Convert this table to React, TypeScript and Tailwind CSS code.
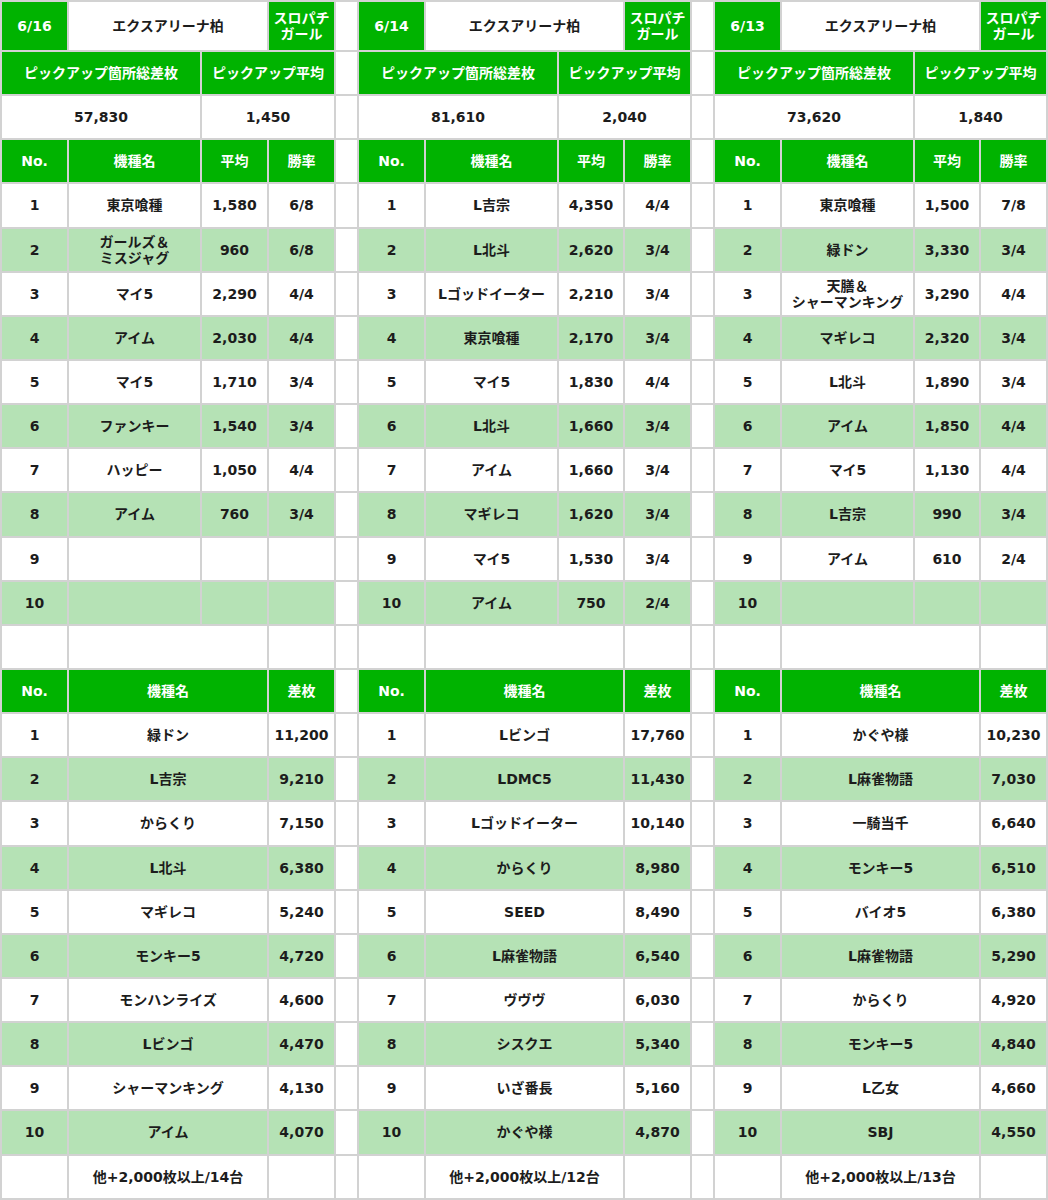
import React from 'react';

type Kind = 'head' | 'white' | 'light';

interface Panel {
  date: string;
  total: string;
  average: string;
  picks: Array<[string, string, string] | null>;
  ranking: Array<[string, string]>;
  footer: string;
}

const panels: Panel[] = [
  {
    date: '6/16',
    total: '57,830',
    average: '1,450',
    picks: [
      ['東京喰種', '1,580', '6/8'],
      ['ガールズ＆\nミスジャグ', '960', '6/8'],
      ['マイ5', '2,290', '4/4'],
      ['アイム', '2,030', '4/4'],
      ['マイ5', '1,710', '3/4'],
      ['ファンキー', '1,540', '3/4'],
      ['ハッピー', '1,050', '4/4'],
      ['アイム', '760', '3/4'],
      null,
      null,
    ],
    ranking: [
      ['緑ドン', '11,200'],
      ['L吉宗', '9,210'],
      ['からくり', '7,150'],
      ['L北斗', '6,380'],
      ['マギレコ', '5,240'],
      ['モンキー5', '4,720'],
      ['モンハンライズ', '4,600'],
      ['Lビンゴ', '4,470'],
      ['シャーマンキング', '4,130'],
      ['アイム', '4,070'],
    ],
    footer: '他+2,000枚以上/14台',
  },
  {
    date: '6/14',
    total: '81,610',
    average: '2,040',
    picks: [
      ['L吉宗', '4,350', '4/4'],
      ['L北斗', '2,620', '3/4'],
      ['Lゴッドイーター', '2,210', '3/4'],
      ['東京喰種', '2,170', '3/4'],
      ['マイ5', '1,830', '4/4'],
      ['L北斗', '1,660', '3/4'],
      ['アイム', '1,660', '3/4'],
      ['マギレコ', '1,620', '3/4'],
      ['マイ5', '1,530', '3/4'],
      ['アイム', '750', '2/4'],
    ],
    ranking: [
      ['Lビンゴ', '17,760'],
      ['LDMC5', '11,430'],
      ['Lゴッドイーター', '10,140'],
      ['からくり', '8,980'],
      ['SEED', '8,490'],
      ['L麻雀物語', '6,540'],
      ['ヴヴヴ', '6,030'],
      ['シスクエ', '5,340'],
      ['いざ番長', '5,160'],
      ['かぐや様', '4,870'],
    ],
    footer: '他+2,000枚以上/12台',
  },
  {
    date: '6/13',
    total: '73,620',
    average: '1,840',
    picks: [
      ['東京喰種', '1,500', '7/8'],
      ['緑ドン', '3,330', '3/4'],
      ['天膳＆\nシャーマンキング', '3,290', '4/4'],
      ['マギレコ', '2,320', '3/4'],
      ['L北斗', '1,890', '3/4'],
      ['アイム', '1,850', '4/4'],
      ['マイ5', '1,130', '4/4'],
      ['L吉宗', '990', '3/4'],
      ['アイム', '610', '2/4'],
      null,
    ],
    ranking: [
      ['かぐや様', '10,230'],
      ['L麻雀物語', '7,030'],
      ['一騎当千', '6,640'],
      ['モンキー5', '6,510'],
      ['バイオ5', '6,380'],
      ['L麻雀物語', '5,290'],
      ['からくり', '4,920'],
      ['モンキー5', '4,840'],
      ['L乙女', '4,660'],
      ['SBJ', '4,550'],
    ],
    footer: '他+2,000枚以上/13台',
  },
];

const kindClass: Record<Kind, string> = {
  head: 'bg-[#00b300] text-white',
  white: 'bg-white text-[#1c1c1c]',
  light: 'bg-[#b5e2b5] text-[#1c1c1c]',
};

const Cell: React.FC<{ kind?: Kind; span?: 1 | 2; children?: React.ReactNode }> = ({
  kind = 'white',
  span = 1,
  children,
}) => (
  <div
    className={`${kindClass[kind]} ${span === 2 ? 'col-span-2' : ''} flex items-center justify-center text-center whitespace-pre-line leading-[16px]`}
  >
    {children}
  </div>
);

// one grid row of a panel, as the list of its cells
const panelRow = (p: Panel, row: number): React.ReactNode[] => {
  if (row === 0) {
    return [
      <Cell kind="head">{p.date}</Cell>,
      <Cell span={2}>エクスアリーナ柏</Cell>,
      <Cell kind="head">{'スロパチ\nガール'}</Cell>,
    ];
  }
  if (row === 1) {
    return [
      <Cell kind="head" span={2}>ピックアップ箇所総差枚</Cell>,
      <Cell kind="head" span={2}>ピックアップ平均</Cell>,
    ];
  }
  if (row === 2) {
    return [<Cell span={2}>{p.total}</Cell>, <Cell span={2}>{p.average}</Cell>];
  }
  if (row === 3) {
    return [
      <Cell kind="head">No.</Cell>,
      <Cell kind="head">機種名</Cell>,
      <Cell kind="head">平均</Cell>,
      <Cell kind="head">勝率</Cell>,
    ];
  }
  if (row >= 4 && row <= 13) {
    const i = row - 4;
    const kind: Kind = i % 2 === 1 ? 'light' : 'white';
    const pick = p.picks[i];
    return [
      <Cell kind={kind}>{i + 1}</Cell>,
      <Cell kind={kind}>{pick?.[0]}</Cell>,
      <Cell kind={kind}>{pick?.[1]}</Cell>,
      <Cell kind={kind}>{pick?.[2]}</Cell>,
    ];
  }
  if (row === 14) {
    return [<Cell />, <Cell span={2} />, <Cell />];
  }
  if (row === 15) {
    return [
      <Cell kind="head">No.</Cell>,
      <Cell kind="head" span={2}>機種名</Cell>,
      <Cell kind="head">差枚</Cell>,
    ];
  }
  if (row >= 16 && row <= 25) {
    const i = row - 16;
    const kind: Kind = i % 2 === 1 ? 'light' : 'white';
    const [name, diff] = p.ranking[i];
    return [
      <Cell kind={kind}>{i + 1}</Cell>,
      <Cell kind={kind} span={2}>{name}</Cell>,
      <Cell kind={kind}>{diff}</Cell>,
    ];
  }
  return [<Cell />, <Cell span={2}>{p.footer}</Cell>, <Cell />];
};

export default function App() {
  const cells: React.ReactNode[] = [];
  for (let row = 0; row < 27; row++) {
    panels.forEach((p, pi) => {
      cells.push(...panelRow(p, row));
      if (pi < panels.length - 1) cells.push(<Cell />);
    });
  }

  return (
    <div className="w-[1048px] h-[1200px] bg-white font-['DejaVu_Sans','Noto_Sans_CJK_JP',sans-serif] font-bold text-[14px]">
      <div className="grid grid-cols-[65px_131px_65px_65px_21px_65px_131px_64px_65px_21px_65px_131px_64px_65px] grid-rows-[48px_repeat(26,42.15px)] gap-[2px] p-[2px] bg-[#d2d2d2]">
        {cells.map((c, i) => (
          <React.Fragment key={i}>{c}</React.Fragment>
        ))}
      </div>
    </div>
  );
}
